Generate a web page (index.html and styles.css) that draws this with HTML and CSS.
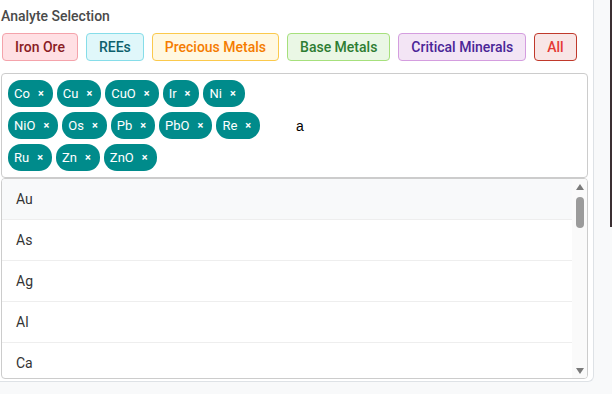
FILE: index.html
```html
<!DOCTYPE html>
<html lang="en">
<head>
  <meta charset="UTF-8">
  <title>Analyte Selection</title>
  <meta name="viewport" content="width=device-width, initial-scale=1.0">
  <link rel="stylesheet" href="styles.css">
</head>
<body>

<div class="panel">
  <div class="title">Analyte Selection</div>

  <!-- Group presets -->
  <div class="groups">
    <button class="group iron">Iron Ore</button>
    <button class="group rees">REEs</button>
    <button class="group precious">Precious Metals</button>
    <button class="group base">Base Metals</button>
    <button class="group critical">Critical Minerals</button>
    <button class="group all">All</button>
  </div>

  <!-- Selected analytes -->
  <div class="tag-box">
    <div class="chips">
      <span class="chip">Co<span class="x">&times;</span></span>
      <span class="chip">Cu<span class="x">&times;</span></span>
      <span class="chip">CuO<span class="x">&times;</span></span>
      <span class="chip">Ir<span class="x">&times;</span></span>
      <span class="chip">Ni<span class="x">&times;</span></span>
      <span class="chip">NiO<span class="x">&times;</span></span>
      <span class="chip">Os<span class="x">&times;</span></span>
      <span class="chip">Pb<span class="x">&times;</span></span>
      <span class="chip">PbO<span class="x">&times;</span></span>
      <span class="chip">Re<span class="x">&times;</span></span>
      <span class="chip">Ru<span class="x">&times;</span></span>
      <span class="chip">Zn<span class="x">&times;</span></span>
      <span class="chip">ZnO<span class="x">&times;</span></span>
    </div>
    <input class="search" type="text" value="a">
  </div>

  <!-- Options dropdown -->
  <div class="dropdown">
    <ul class="options">
      <li class="active">Au</li>
      <li>As</li>
      <li>Ag</li>
      <li>Al</li>
      <li>Ca</li>
    </ul>
    <div class="scrollbar">
      <span class="arrow up"></span>
      <span class="thumb"></span>
      <span class="arrow down"></span>
    </div>
  </div>
</div>

<div class="edge"></div>

</body>
</html>
```

FILE: styles.css
```css
* {
  box-sizing: border-box;
}

html, body {
  margin: 0;
  padding: 0;
  background: #f8f9fa;
  font-family: Roboto, 'Liberation Sans', sans-serif;
}

.panel {
  width: 594px;
  height: 382px;
  background: #fff;
  border-right: 1px solid #dee2e6;
  border-bottom: 1px solid #dee2e6;
  border-bottom-right-radius: 6px;
  padding: 8px 5px 2px 1px;
  display: flex;
  flex-direction: column;
}

.title {
  font-size: 14px;
  line-height: 16px;
  font-weight: 500;
  color: #4a4a4a;
  margin-bottom: 9px;
}

.groups {
  display: flex;
  gap: 8px;
  padding-left: 1px;
  margin-bottom: 12px;
}

.group {
  height: 28px;
  padding: 0 12px;
  border: 1px solid;
  border-radius: 4px;
  font-family: Roboto, sans-serif;
  font-size: 14px;
  font-weight: 500;
  cursor: pointer;
}

.iron {
  background: #ffe0e4;
  border-color: #f4a3ab;
  color: #8a1c24;
}

.rees {
  background: #e0f7fa;
  border-color: #86dde9;
  color: #0d5f6c;
}

.precious {
  background: #fff8e1;
  border-color: #fbc94c;
  color: #f57c00;
}

.base {
  background: #eaf7e5;
  border-color: #a6e07c;
  color: #2e7d32;
}

.critical {
  background: #f3e5f5;
  border-color: #d49ddf;
  color: #4a2597;
}

.all {
  background: #f8e6e6;
  border-color: #c0392b;
  color: #e53935;
}

.tag-box {
  display: flex;
  align-items: center;
  height: 105px;
  border: 1px solid #ccc;
  border-radius: 4px;
  padding: 6px;
}

.chips {
  width: 262px;
  display: flex;
  flex-wrap: wrap;
  gap: 5px 4px;
}

.chip {
  display: inline-flex;
  align-items: center;
  height: 27px;
  padding: 0 9px 0 6px;
  background: #008b8b;
  color: #fff;
  border-radius: 13px;
  font-size: 13px;
}

.chip .x {
  margin-left: 8px;
  font-size: 11px;
  font-weight: 700;
}

.search {
  flex: 1;
  margin-left: 24px;
  padding: 0 2px;
  border: none;
  outline: none;
  font-family: 'Liberation Sans', Arial, sans-serif;
  font-size: 14px;
  color: #000;
  background: transparent;
}

.dropdown {
  display: flex;
  height: 201px;
  overflow: hidden;
  border: 1px solid #ccc;
  border-radius: 4px;
}

.options {
  flex: 1;
  list-style: none;
  margin: 0;
  padding: 0;
}

.options li {
  height: 41px;
  line-height: 40px;
  padding-left: 14px;
  border-bottom: 1px solid #eee;
  font-size: 14px;
  color: #333;
}

.options li.active {
  background: #f8f9fa;
}

.scrollbar {
  width: 15px;
  background: #fafafa;
  display: flex;
  flex-direction: column;
  align-items: center;
  padding: 5px 0 4px;
}

.arrow {
  width: 0;
  height: 0;
  border-left: 4.5px solid transparent;
  border-right: 4.5px solid transparent;
}

.arrow.up {
  border-bottom: 6px solid #7a7a7a;
}

.arrow.down {
  margin-top: auto;
  border-top: 6px solid #7a7a7a;
}

.thumb {
  width: 8px;
  height: 31px;
  margin-top: 7px;
  border-radius: 4px;
  background: #9b9b9b;
}

.edge {
  position: absolute;
  top: 0;
  right: 0;
  width: 2px;
  height: 227px;
  background: #3b2f33;
}
```
